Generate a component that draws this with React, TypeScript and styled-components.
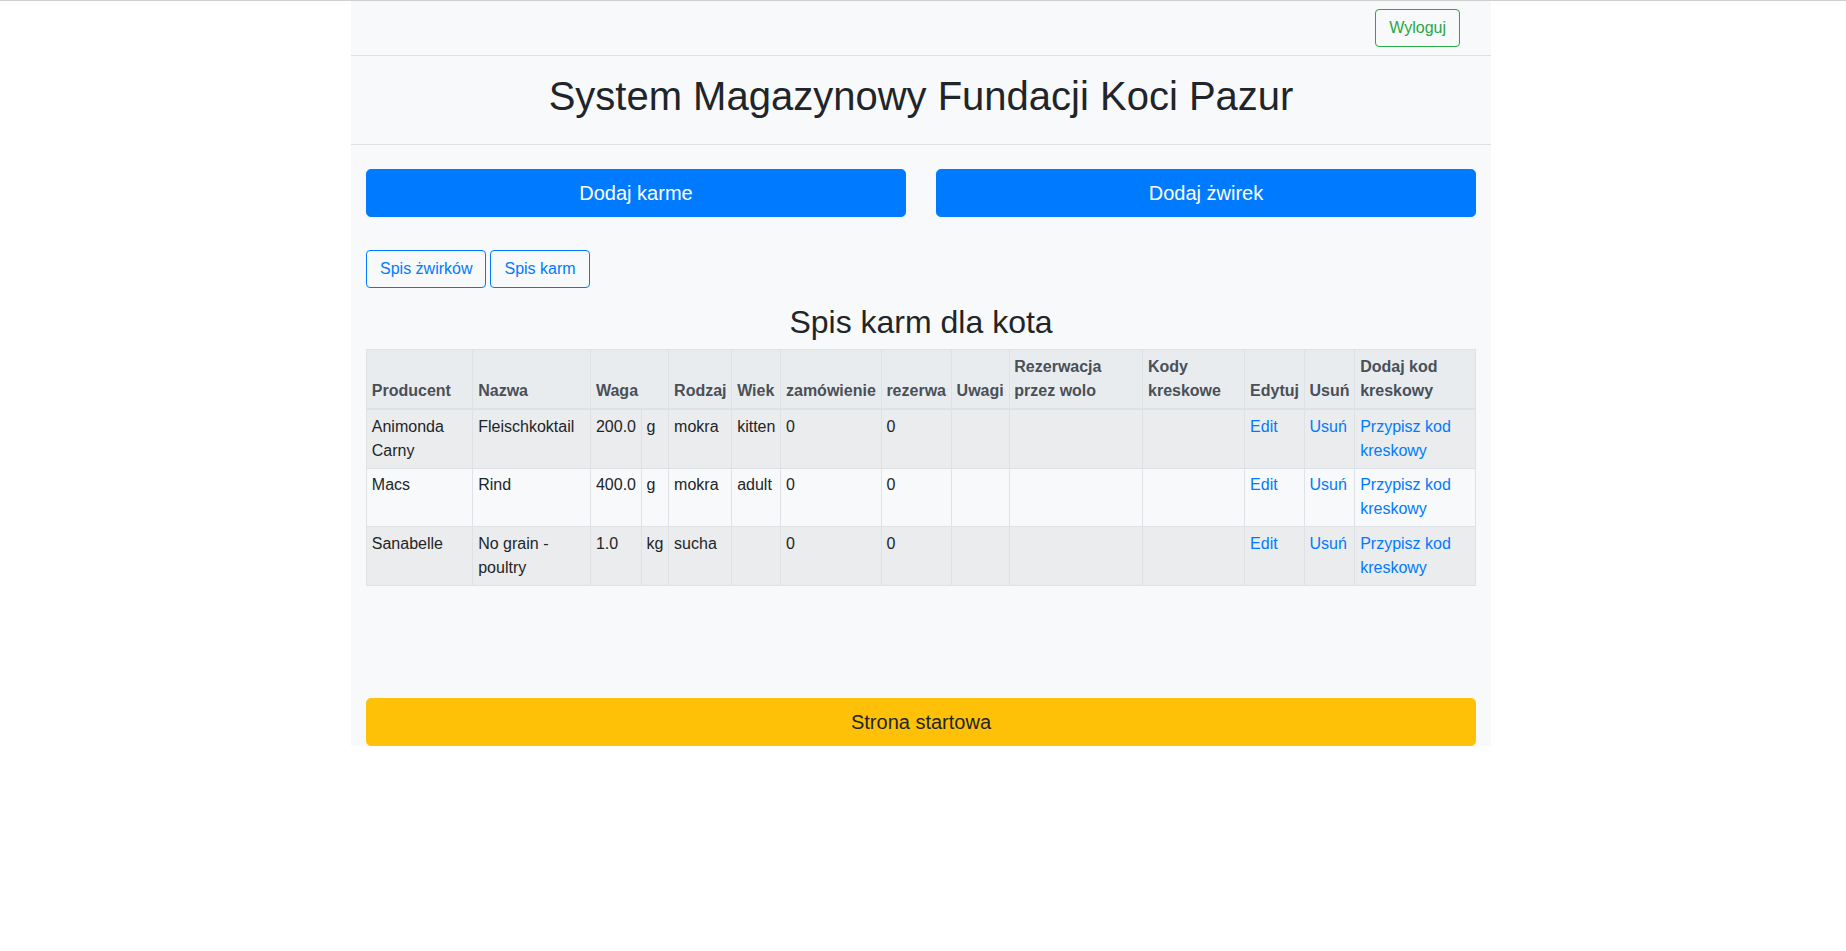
import React from "react";
import styled, { createGlobalStyle } from "styled-components";

const GlobalStyle = createGlobalStyle`
  html, body { margin: 0; padding: 0; }
  body {
    border-top: 1px solid #cfcfcf;
    background: #fff;
    font-family: "Liberation Sans", Arial, sans-serif;
    font-size: 16px;
    line-height: 1.5;
    color: #212529;
  }
  * { box-sizing: border-box; }
`;

const Container = styled.div`
  width: 1140px;
  margin-left: calc(50% - 572px);
  background: #f8f9fa;
`;

const TopBar = styled.nav`
  display: flex;
  justify-content: flex-end;
  align-items: center;
  padding: 8px 31px 8px 16px;
  border-bottom: 1px solid #dee2e6;
`;

const TitleBar = styled.header`
  padding: 16px 0;
  text-align: center;
  border-bottom: 1px solid #dee2e6;
`;

const Title = styled.h1`
  margin: 0 0 8px;
  font-size: 40px;
  font-weight: 400;
  line-height: 1.2;
`;

const Content = styled.main`
  padding: 0 15px;
`;

const ActionRow = styled.div`
  display: grid;
  grid-template-columns: 1fr 1fr;
  column-gap: 30px;
  margin-top: 24px;
`;

type Variant = "primary" | "outlinePrimary" | "outlineSuccess" | "warning";

const palette: Record<Variant, { bg: string; fg: string; border: string }> = {
  primary: { bg: "#007bff", fg: "#fff", border: "#007bff" },
  outlinePrimary: { bg: "transparent", fg: "#007bff", border: "#007bff" },
  outlineSuccess: { bg: "transparent", fg: "#28a745", border: "#28a745" },
  warning: { bg: "#ffc107", fg: "#212529", border: "#ffc107" },
};

const Button = styled.button<{ $variant: Variant; $large?: boolean; $block?: boolean }>`
  display: ${(p) => (p.$block ? "block" : "inline-block")};
  width: ${(p) => (p.$block ? "100%" : "auto")};
  font-family: inherit;
  font-weight: 400;
  text-align: center;
  cursor: pointer;
  background: ${(p) => palette[p.$variant].bg};
  color: ${(p) => palette[p.$variant].fg};
  border: 1px solid ${(p) => palette[p.$variant].border};
  font-size: ${(p) => (p.$large ? "20px" : "16px")};
  line-height: 1.5;
  padding: ${(p) => (p.$large ? "8px 16px" : "6px 13px")};
  border-radius: ${(p) => (p.$large ? "4.8px" : "4px")};
`;

const ListButtons = styled.div`
  display: flex;
  gap: 4px;
  margin-top: 33px;
`;

const Subtitle = styled.h2`
  margin: 15px 0 8px;
  text-align: center;
  font-size: 32px;
  font-weight: 400;
  line-height: 1.2;
`;

const Table = styled.table`
  width: 100%;
  border-collapse: collapse;
  border: 1px solid #dee2e6;
  color: #212529;
`;

const Th = styled.th`
  padding: 4.8px;
  text-align: left;
  vertical-align: bottom;
  font-weight: 700;
  color: #495057;
  background: #e9ecef;
  border: 1px solid #dee2e6;
  border-bottom-width: 2px;
`;

const Tr = styled.tr<{ $striped: boolean }>`
  background: ${(p) => (p.$striped ? "rgba(0,0,0,0.05)" : "transparent")};
`;

const Td = styled.td`
  padding: 4.8px;
  vertical-align: top;
  border: 1px solid #dee2e6;
`;

const Link = styled.a`
  color: #007bff;
  text-decoration: none;
`;

const HomeButtonWrap = styled.div`
  margin-top: 112px;
`;

type Row = {
  producer: string;
  name: string;
  weight: string;
  unit: string;
  kind: string;
  age: string;
};

const rows: Row[] = [
  { producer: "Animonda Carny", name: "Fleischkoktail", weight: "200.0", unit: "g", kind: "mokra", age: "kitten" },
  { producer: "Macs", name: "Rind", weight: "400.0", unit: "g", kind: "mokra", age: "adult" },
  { producer: "Sanabelle", name: "No grain - poultry", weight: "1.0", unit: "kg", kind: "sucha", age: "" },
];

export default function App() {
  return (
    <>
      <GlobalStyle />
      <Container>
        <TopBar>
          <Button $variant="outlineSuccess">Wyloguj</Button>
        </TopBar>
        <TitleBar>
          <Title>System Magazynowy Fundacji Koci Pazur</Title>
        </TitleBar>
        <Content>
          <ActionRow>
            <Button $variant="primary" $large $block>Dodaj karme</Button>
            <Button $variant="primary" $large $block>Dodaj żwirek</Button>
          </ActionRow>
          <ListButtons>
            <Button $variant="outlinePrimary">Spis żwirków</Button>
            <Button $variant="outlinePrimary">Spis karm</Button>
          </ListButtons>
          <Subtitle>Spis karm dla kota</Subtitle>
          <Table>
            <thead>
              <tr>
                <Th>Producent</Th>
                <Th>Nazwa</Th>
                <Th colSpan={2}>Waga</Th>
                <Th>Rodzaj</Th>
                <Th>Wiek</Th>
                <Th>zamówienie</Th>
                <Th>rezerwa</Th>
                <Th>Uwagi</Th>
                <Th>Rezerwacja przez wolo</Th>
                <Th>Kody kreskowe</Th>
                <Th>Edytuj</Th>
                <Th>Usuń</Th>
                <Th>Dodaj kod kreskowy</Th>
              </tr>
            </thead>
            <tbody>
              {rows.map((r, i) => (
                <Tr key={r.producer} $striped={i % 2 === 0}>
                  <Td>{r.producer}</Td>
                  <Td>{r.name}</Td>
                  <Td>{r.weight}</Td>
                  <Td>{r.unit}</Td>
                  <Td>{r.kind}</Td>
                  <Td>{r.age}</Td>
                  <Td>0</Td>
                  <Td>0</Td>
                  <Td></Td>
                  <Td></Td>
                  <Td></Td>
                  <Td><Link href="#">Edit</Link></Td>
                  <Td><Link href="#">Usuń</Link></Td>
                  <Td><Link href="#">Przypisz kod kreskowy</Link></Td>
                </Tr>
              ))}
            </tbody>
          </Table>
          <HomeButtonWrap>
            <Button $variant="warning" $large $block>Strona startowa</Button>
          </HomeButtonWrap>
        </Content>
      </Container>
    </>
  );
}
